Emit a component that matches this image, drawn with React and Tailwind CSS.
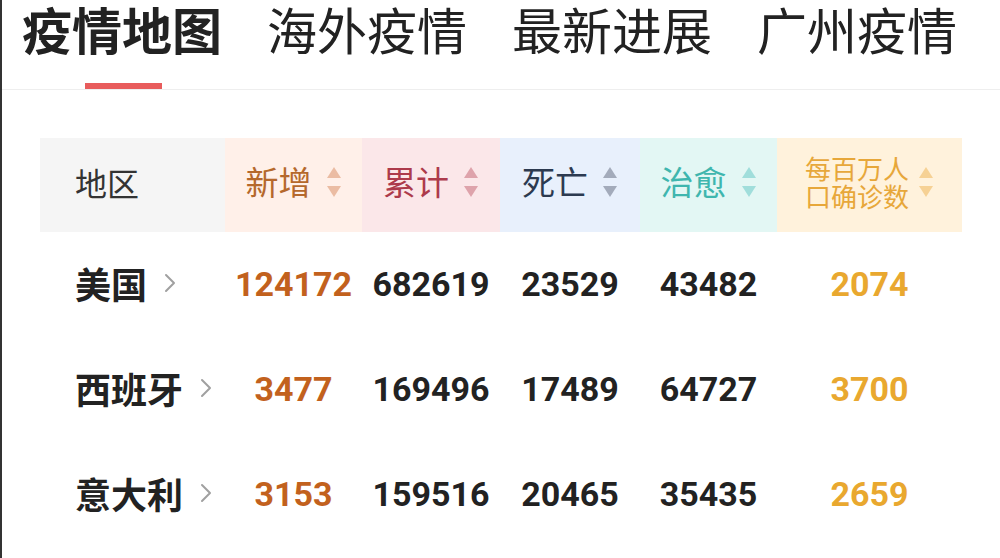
const CJK = { fontFamily: '"Noto Sans CJK SC", "Noto Sans", sans-serif' };
const NUM = { fontFamily: 'Roboto, "Noto Sans CJK SC", sans-serif' };

const tabs = ['疫情地图', '海外疫情', '最新进展', '广州疫情'];

const cols = [
  { key: 'add', label: '新增', bg: 'bg-[#fff0e9]', text: 'text-[#b5682c]', arrow: '#ebbca3', w: 'w-[137px]' },
  { key: 'total', label: '累计', bg: 'bg-[#fbe7e9]', text: 'text-[#ad3a4b]', arrow: '#dea3ab', w: 'w-[138px]' },
  { key: 'dead', label: '死亡', bg: 'bg-[#e8f0fc]', text: 'text-[#2c3a50]', arrow: '#a3abbb', w: 'w-[140px]' },
  { key: 'cure', label: '治愈', bg: 'bg-[#e3f7f4]', text: 'text-[#3fb6ae]', arrow: '#a0dedb', w: 'w-[137px]' },
];

const rows = [
  { name: '美国', add: '124172', total: '682619', dead: '23529', cure: '43482', per: '2074' },
  { name: '西班牙', add: '3477', total: '169496', dead: '17489', cure: '64727', per: '3700' },
  { name: '意大利', add: '3153', total: '159516', dead: '20465', cure: '35435', per: '2659' },
];

function SortArrows({ color }) {
  return (
    <svg width="16" height="32" viewBox="0 0 16 32" className="shrink-0">
      <path d="M8 1 L15 12 L1 12 Z" fill={color} />
      <path d="M1 20 L15 20 L8 31 Z" fill={color} />
    </svg>
  );
}

function Chevron() {
  return (
    <svg width="14" height="22" viewBox="0 0 14 22" className="shrink-0">
      <path d="M3 3 L11 11 L3 19" fill="none" stroke="#a0a0a0" strokeWidth="2" strokeLinecap="round" strokeLinejoin="round" />
    </svg>
  );
}

export default function App() {
  return (
    <div className="w-[1000px] h-[558px] overflow-hidden bg-white border-l-2 border-[#333]" style={CJK}>
      <div className="border-b border-[#eeeeee]">
        <div className="flex h-[56px] items-center gap-[45px] pl-[20px]">
          {tabs.map((t, i) => (
            <div
              key={t}
              className={`text-[50px] leading-[56px] text-[#222] ${i === 0 ? 'font-bold' : 'font-normal'}`}
            >
              {t}
            </div>
          ))}
        </div>
        <div className="h-[33px] flex items-end pl-[83px]">
          <div className="w-[77px] h-[6px] bg-[#e85c5c]" />
        </div>
      </div>

      <div className="mt-[48px] ml-[38px] w-[922px]">
        <div className="flex h-[94px]">
          <div className="w-[185px] bg-[#f5f5f5] flex items-center pl-[35px] pb-[7px] text-[32px] text-[#333]">地区</div>
          {cols.map((c) => (
            <div key={c.key} className={`${c.w} ${c.bg} flex items-center justify-center gap-[14px] pb-[7px]`}>
              <span className={`text-[33px] ${c.text}`}>{c.label}</span>
              <SortArrows color={c.arrow} />
            </div>
          ))}
          <div className="w-[185px] bg-[#fff2dc] flex items-center justify-center gap-[9px] pb-[6px]">
            <div className="text-[26px] leading-[28px] text-[#e7a73a] text-center">
              每百万人
              <br />
              口确诊数
            </div>
            <SortArrows color="#f6d194" />
          </div>
        </div>

        {rows.map((r) => (
          <div key={r.name} className="flex h-[105px] items-center">
            <div className="w-[185px] flex items-center gap-[16px] pl-[35px] pb-[4px]">
              <span className="text-[36px] font-bold text-[#222]">{r.name}</span>
              <Chevron />
            </div>
            <div className="w-[137px] text-center text-[34px] font-bold text-[#c2611d]" style={NUM}>{r.add}</div>
            <div className="w-[138px] text-center text-[34px] font-bold text-[#222]" style={NUM}>{r.total}</div>
            <div className="w-[140px] text-center text-[34px] font-bold text-[#222]" style={NUM}>{r.dead}</div>
            <div className="w-[137px] text-center text-[34px] font-bold text-[#222]" style={NUM}>{r.cure}</div>
            <div className="w-[185px] text-center text-[34px] font-bold text-[#e9a82f]" style={NUM}>{r.per}</div>
          </div>
        ))}
      </div>
    </div>
  );
}
